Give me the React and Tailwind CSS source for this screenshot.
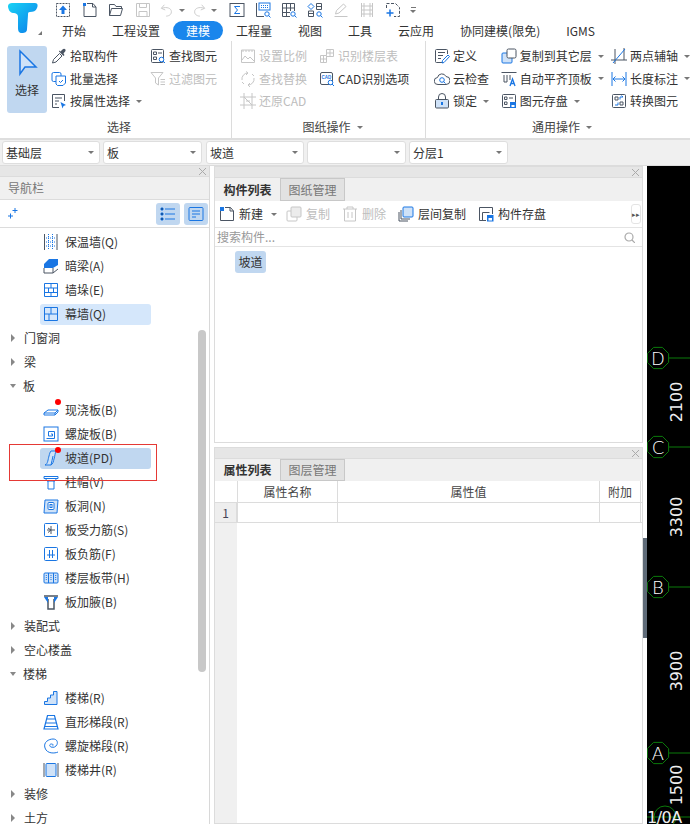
const BLUE = "#1a76e3";
const DARK = "#4b5563";
const GREY = "#c6c6c6";
const PALE = "#cfe2f8";

function Svg({ children, size = 16, className = "" }) {
  return (
    <svg width={size} height={size} viewBox="0 0 16 16" fill="none" strokeWidth="1" className={`shrink-0 ${className}`}>
      {children}
    </svg>
  );
}

const icons = {
  upload: (
    <>
      <rect x="1.5" y="1.5" width="13" height="13" stroke={DARK} strokeDasharray="2 1" />
      <path d="M8 3.5 12 8H9.5v4h-3V8H4z" fill={BLUE} />
    </>
  ),
  newFile: (
    <>
      <path d="M2 3v11.5h12V5l-3-3.5H5" stroke={DARK} />
      <path d="M10.5 1.5V5H14" stroke={DARK} />
      <path d="M1 1h3v3H1z" fill={BLUE} strokeDasharray="1 1" />
    </>
  ),
  open: <path d="M1.5 13.5v-11h5l1.5 2h5.5v2M1.5 13.5h11l2-7h-11z" stroke={DARK} />,
  save: (
    <>
      <path d="M1.5 1.5h13v13h-13z" stroke={GREY} />
      <path d="M4.5 1.5v4h7v-4M4 14.5v-5h8v5" stroke={GREY} />
    </>
  ),
  undo: <path d="M5 2 1.5 6 6 8M2 6c6-2 11 0 11 4s-4 5-6 5" stroke={GREY} />,
  redo: <path d="M11 2l3.5 4L10 8M14 6C8 4 3 6 3 10s4 5 6 5" stroke={GREY} />,
  sigma: (
    <>
      <rect x="1" y="1.5" width="14" height="13" stroke={DARK} />
      <path d="M11 4.5H5.5L8.5 8l-3 3.5H11" stroke={BLUE} />
    </>
  ),
  gridFind: (
    <>
      <path d="M1.5 1v13.5H9" stroke={DARK} />
      <rect x="4" y="1" width="11" height="7" stroke={BLUE} />
      <path d="M6 3.5h7M6 5.5h7" stroke={BLUE} strokeDasharray="1 1" />
      <circle cx="12" cy="12" r="2.2" stroke={BLUE} />
      <path d="m13.5 13.5 2 2" stroke={BLUE} />
    </>
  ),
  tableFind: (
    <>
      <path d="M9 14.5H1.5v-13h12V9M1.5 6h12M1.5 10.5H9M5.5 1.5v13M9.5 1.5V9" stroke={DARK} />
      <circle cx="12" cy="12" r="2.2" stroke={BLUE} />
      <path d="m13.5 13.5 2 2" stroke={BLUE} />
    </>
  ),
  nodeFind: (
    <>
      <path d="M9.5 1.5h5v6h-5zM9.5 4.5h5M1.5 9h5v5.5h-5zM1.5 11.5h5" stroke={DARK} />
      <path d="m4 1.5 3 3-3 3-3-3z" stroke={BLUE} />
      <circle cx="12" cy="12" r="2.2" stroke={BLUE} />
      <path d="m13.5 13.5 2 2" stroke={BLUE} />
    </>
  ),
  pen: <path d="M1.5 14.5h13M2.5 12l1-3.5 7-6.5 2.5 2.5-7 6.5z" stroke={GREY} />,
  columns: <path d="M2.5 1v14M13.5 1v14M2.5 4h11M2.5 8h11M2.5 12h11M5 1v14M11 1v14" stroke={GREY} />,
  addFrame: (
    <>
      <path d="M1.5 6V1.5h9l4 4v9H9" stroke={DARK} strokeDasharray="3 1.5" />
      <path d="M5 7.5v7M1.5 11h7" stroke={BLUE} strokeWidth="1.5" />
    </>
  ),
  pick: (
    <>
      <path d="m1.5 15 1-3.5 6-6 2.5 2.5-6 6z" stroke={DARK} />
      <path d="m8 3.5 4.5 4.5 1-1-1-1.5 2-2.5c.5-2-1.5-3-3-1.5l-2 2-1.5-1z" fill={DARK} />
    </>
  ),
  batch: (
    <>
      <rect x="1" y="1.5" width="9" height="9" rx="1.5" stroke={BLUE} />
      <path d="M5 5h9.5v7L12 14.5H6.5L5 13z" stroke={BLUE} fill="#fff" />
      <path d="m8 10 1.5 1.5L12 9" stroke={BLUE} />
    </>
  ),
  attrSelect: (
    <>
      <path d="M8 14.5H1.5v-13h12V8" stroke={DARK} />
      <path d="M4 5h7M4 8h4M4 11h2" stroke={DARK} />
      <path d="m9.5 9 5.500 3-2.500 1-1 2.500z" fill={BLUE} />
    </>
  ),
  findEl: (
    <>
      <rect x="1.5" y="1.5" width="12" height="13" rx="1" stroke={DARK} />
      <path d="M3.5 4h3v2.5h-3zM8 5h4M3.5 9h3v2.5h-3z" stroke={DARK} />
      <circle cx="11.5" cy="11.5" r="2.3" fill="#fff" stroke={BLUE} />
      <path d="m13 13 2 2" stroke={BLUE} />
    </>
  ),
  filter: <path d="M1 1.5h12L8.5 7v7L5.5 12V7zM10.5 8.5H15M10.500 11H15M10.500 13.500H15" stroke={GREY} />,
  scale: <path d="M1.5 2h13M1.5 2v12.5h13V2M3 2v2M6 2v2M9 2v2M12 2v2M2 12l3-4 3 3 2-2 4 4" stroke={GREY} />,
  layers: <path d="M1.5 14.5v-7h6v-6h7v7H8M4.5 7.500v7M11 1.500v7M1.500 11h6M8 5h6.500M7.500 7.500V14.500h-6" stroke={GREY} />,
  replace: <path d="M2 9A6 6 0 0 1 8 2M6 .5 8 2 6 4M14 7a6 6 0 0 1-6 7M10 12l-2 2 2 2M2 11l2 2M14 5l-2-2" stroke={GREY} />,
  restore: <path d="M0 4h16M0 12h16M4 0v16M12 0v16M4 4l8 8M6 8h4" stroke={GREY} />,
  cad: (
    <>
      <rect x="1.5" y="1.5" width="12" height="12" rx="1.5" stroke={DARK} />
      <text x="2.6" y="7.5" fontSize="4.5" fontWeight="700" fill={BLUE} fontFamily="Liberation Sans">CAD</text>
      <circle cx="11.5" cy="11.5" r="2.3" fill="#fff" stroke={BLUE} />
      <path d="m13 13 2 2" stroke={BLUE} />
    </>
  ),
  define: (
    <>
      <path d="M9 14.5H2.5a1 1 0 0 1-1-1v-11a1 1 0 0 1 1-1h10a1 1 0 0 1 1 1V6" stroke={DARK} />
      <path d="M4 4.5h7M4 7.5h5M4 10.5h3" stroke={DARK} />
      <path d="m8 15 .5-2.5L14 7l1.500 1.500-5.500 6z" stroke={BLUE} />
    </>
  ),
  cloud: (
    <>
      <path d="M4 13.5a3.5 3.5 0 0 1-.5-7A4.5 4.5 0 0 1 12 5.5a4 4 0 0 1 0 8z" stroke={DARK} />
      <circle cx="8" cy="9" r="2.3" stroke={BLUE} />
      <path d="m9.5 10.5 2 2" stroke={BLUE} />
    </>
  ),
  lock: (
    <>
      <rect x="1.5" y="6.5" width="13" height="8.5" rx="1" stroke={DARK} fill={PALE} />
      <path d="M4.5 6.5V4a3.5 3.5 0 0 1 7 0v2.5" stroke={DARK} />
      <rect x="7" y="9" width="2" height="3" fill={BLUE} />
    </>
  ),
  copyLayer: (
    <>
      <rect x="1" y="5" width="10" height="10" rx="1" fill={PALE} stroke={BLUE} />
      <rect x="6" y="1" width="9" height="9" rx="1.5" fill="#fff" stroke={DARK} />
    </>
  ),
  align: (
    <>
      <path d="M.5 1.5h15M3 4v7h3V4M9 4v5" stroke={DARK} />
      <path d="m9 15 2.5-7 2.5 7M10 12.5h3" stroke={BLUE} strokeWidth="1.3" />
    </>
  ),
  storeEl: (
    <>
      <rect x="1.5" y="1.5" width="13" height="13" rx="1" stroke={DARK} />
      <path d="M3.5 4H6v2.5H3.5zM8 5h4M3.5 9H6v2.5H3.5z" stroke={DARK} />
      <rect x="9" y="9" width="6" height="6" fill={BLUE} />
      <rect x="10.5" y="12" width="3" height="2" fill="#fff" />
    </>
  ),
  twoPoint: (
    <>
      <path d="M4 1v15M0 12h16M13 0v12" stroke={DARK} />
      <path d="m2 15 12-14" stroke={BLUE} />
    </>
  ),
  measure: <path d="M1 1v14M15 1v14M2 8h12M4.5 5.5 2 8l2.5 2.5M11.5 5.5 14 8l-2.5 2.5" stroke={BLUE} />,
  convert: (
    <>
      <rect x="1.5" y="1.5" width="13" height="13" rx="1" stroke={DARK} />
      <path d="M4 4h3v3H4zM9 9h3v3H9z" stroke={DARK} />
      <path d="M9 6.5V4h3M10.5 2.5 12 4M7 9.5V12H4" stroke={BLUE} />
    </>
  ),
  newDoc: (
    <>
      <path d="M1.5 5v9.5h13V5l-3-3.500H6" stroke={DARK} />
      <path d="M11 1.5V5h3.5" stroke={DARK} />
      <path d="M1 1h4v4H1z" fill={BLUE} />
    </>
  ),
  copyOff: (
    <>
      <rect x="1" y="5" width="10" height="10" rx="1" stroke={GREY} />
      <rect x="5" y="1" width="10" height="10" rx="1" fill="#ececec" stroke={GREY} />
    </>
  ),
  trash: <path d="M1 3h14M5 3V1h6v2M2.5 3v12h11V3M6 6v6M10 6v6" stroke={GREY} />,
  floorCopy: (
    <>
      <path d="M1 6v9h9M3 4v9h9" stroke={DARK} />
      <rect x="5" y="1" width="10" height="10" rx="1" fill={PALE} stroke={BLUE} />
    </>
  ),
  saveComp: (
    <>
      <path d="M8 14.5H1.5v-13h13V8" stroke={DARK} />
      <path d="M4.5 14V6.5h7" stroke={DARK} />
      <rect x="9" y="9" width="6.5" height="6.5" fill={BLUE} />
      <rect x="10.5" y="12" width="3.5" height="2.5" fill="#fff" />
    </>
  ),
  insul: (
    <>
      <path d="M1.5 0v16M14 0v16" stroke={DARK} />
      <path d="M5.500 0v16M9.500 0v16M3 4h9.500M3 8h9.500M3 12h9.500" stroke={BLUE} strokeDasharray="1 1" />
    </>
  ),
  hiddenBeam: (
    <>
      <path d="M1 6 6 1h9v6L10 10H1z" fill={BLUE} />
      <path d="M1 10v5h9l5-4M10 10v5" stroke={DARK} />
    </>
  ),
  pier: <path d="M1.5 1.500h13v13h-13zM1.500 6h13M1.500 10.500h13M8 1.500V6M5.500 6v4.500M10.500 6v4.500M8 10.500v4" stroke={BLUE} />,
  curtain: <path d="M1.500 1.500h13v13h-13zM1.500 8h13M8 1.500V8M6 8v6.500" stroke={BLUE} />,
  castSlab: (
    <>
      <path d="m1 11 4-3h10v2l-3 3H1z" stroke={BLUE} />
      <path d="M1 11h11l3-3M12 11v2" stroke={BLUE} />
    </>
  ),
  spiralSlab: (
    <>
      <rect x="1" y="1" width="14" height="14" stroke={BLUE} />
      <path d="M8 8h1.500v2h-4V5.500h6v7h-8" stroke={BLUE} />
    </>
  ),
  ramp: (
    <>
      <path d="M2 15c3-1 3-6 4-9 .5-2 1-4 2-5h5c-1 2-1 5-2 8-.5 2-1 5-3 6z" fill={PALE} stroke={BLUE} />
      <path d="M8 15c1-3 1-6 2-9" stroke={BLUE} />
    </>
  ),
  capital: <path d="M1 2.500h14v2H1zM2.500 4.500h11L12 7H4zM5 7v8h6V7" stroke={BLUE} />,
  hole: (
    <>
      <path d="M2 2h13l-1 13H1z" fill={PALE} stroke={BLUE} />
      <rect x="5" y="4.500" width="6" height="7" rx="1" stroke={BLUE} fill="#fff" />
      <rect x="7" y="6.500" width="2" height="3" stroke={BLUE} />
    </>
  ),
  rebar: (
    <>
      <rect x="1.500" y="1.500" width="13" height="13" rx="1" stroke={BLUE} />
      <path d="M8 4v8M4 8h8M5 6l3 2M5 10.500 8 8" stroke={DARK} />
    </>
  ),
  negRebar: (
    <>
      <rect x="1.500" y="1.500" width="13" height="13" rx="1" stroke={BLUE} />
      <path d="M4 9h8M6.500 4v8M9.500 4v8" stroke={BLUE} />
    </>
  ),
  band: (
    <>
      <rect x="1" y="3" width="14" height="10" rx="1" fill={PALE} stroke={BLUE} />
      <path d="M5.500 3v10M10.500 3v10" stroke={BLUE} />
      <path d="M3.300 5v6M8 5v6M12.700 5v6" stroke={BLUE} strokeDasharray="1 1" />
    </>
  ),
  haunch: (
    <>
      <path d="M1 2h14M5 5v10h6V5" stroke={DARK} strokeWidth="1.500" />
      <path d="m1 3 4 6V3zM15 3l-4 6V3z" fill={BLUE} />
    </>
  ),
  stair: <path d="M1.500 14.500v-3h3V8h3V5h3V1.500h3.500v13z" fill={PALE} stroke={BLUE} />,
  stairRun: <path d="M1 15 4.500 1.500h7L15 15zM4 5h8M3 9h10M2 12.500h12" stroke={BLUE} strokeWidth="1.200" />,
  spiralStair: <path d="M15 14c-3 1.500-11 2-13-4S6 1 10 1c4 0 5 3 4 5.500S10 10 8 9s-1.500-3 .5-3 2 1.500 1 2" stroke={BLUE} />,
  stairWell: (
    <>
      <path d="M1 1v14M15 1v14" stroke={DARK} />
      <rect x="3" y="1.500" width="10" height="13" rx="1" fill={PALE} stroke={BLUE} />
    </>
  ),
};

function Ic({ name }) {
  return <Svg>{icons[name]}</Svg>;
}

function Caret({ className = "" }) {
  return <span className={`inline-block h-0 w-0 border-x-[3px] border-t-[3px] border-x-transparent border-t-[#777] ${className}`} />;
}

function RibbonItem({ icon, label, off, caret }) {
  return (
    <div className={`flex h-[22.5px] items-center gap-[3px] whitespace-nowrap ${off ? "text-[#bdbdbd]" : "text-[#333]"}`}>
      <Ic name={icon} />
      <span>{label}</span>
      {caret && <Caret className="ml-[3px]" />}
    </div>
  );
}

function RibbonGroup({ title, caret, className, children }) {
  return (
    <div className={`flex h-full flex-col border-r border-[#dcdcdc] ${className}`}>
      <div className="flex h-[78px] pt-[4px]">{children}</div>
      <div className="flex h-[16px] items-center justify-center gap-[6px] text-[#444]">
        <span>{title}</span>
        {caret && <Caret />}
      </div>
    </div>
  );
}

function Combo({ label, className = "" }) {
  return (
    <div className={`flex h-[23px] items-center justify-between rounded-[3px] border border-[#dedede] bg-white pr-[5px] pl-[3px] text-[#333] ${className}`}>
      <span>{label}</span>
      <Caret />
    </div>
  );
}

function CloseStrip() {
  return (
    <div className="flex h-[11px] items-center justify-end border-b border-[#dcdcdc] bg-[#e6e6e6] pr-[3px]">
      <svg width="7" height="7" viewBox="0 0 7 7" stroke="#aaa"><path d="m0 0 7 7M7 0 0 7" /></svg>
    </div>
  );
}

function Tabs({ first, second, className = "h-[23px]" }) {
  return (
    <div className={`flex bg-[#f0f0f0] ${className}`}>
      <div className="flex w-[65px] items-center justify-center font-semibold text-[#333]">{first}</div>
      <div className="flex w-[65px] items-center justify-center border border-[#c8c8c8] bg-[#e2e2e2] text-[#777]">{second}</div>
    </div>
  );
}

function Leaf({ icon, label, selected, active, dot }) {
  return (
    <div className="flex h-[24px] items-center pl-[40px]">
      <div className={`flex h-[21px] w-[111px] items-center rounded-[3px] pl-[3px] ${selected ? "bg-[#d5e7fb]" : ""} ${active ? "bg-[#c0d7f0]" : ""}`}>
        <div className="relative mr-[7px] h-[16px] w-[15px]">
          <Ic name={icon} />
          {dot && <span className="absolute -top-[3px] right-[-3px] h-[6px] w-[6px] rounded-full bg-[#f00]" />}
        </div>
        <span className="whitespace-nowrap">{label}</span>
      </div>
    </div>
  );
}

function Group({ label, open }) {
  return (
    <div className="flex h-[24px] items-center pl-[10px]">
      {open ? (
        <span className="mr-[7px] inline-block h-0 w-0 border-x-[3.5px] border-t-[4px] border-x-transparent border-t-[#888]" />
      ) : (
        <span className="mr-[9px] ml-[1px] inline-block h-0 w-0 border-y-[4px] border-l-[4px] border-y-transparent border-l-[#888]" />
      )}
      <span>{label}</span>
    </div>
  );
}

function ToolBtn({ icon, label, off, className = "" }) {
  return (
    <div className={`flex items-center gap-[4px] whitespace-nowrap ${off ? "text-[#bdbdbd]" : "text-[#333]"} ${className}`}>
      <Ic name={icon} />
      <span>{label}</span>
    </div>
  );
}

function Axis({ cy, label }) {
  const pts = [...Array(8)].map((_, i) => {
    const a = (i / 8) * Math.PI * 2 + Math.PI / 8;
    return `${11 + 11.5 * Math.cos(a)},${cy + 11.5 * Math.sin(a)}`;
  });
  return (
    <g>
      <polygon points={pts.join(" ")} fill="none" stroke="#0b7a0b" />
      <line x1="22" x2="43" y1={cy} y2={cy} stroke="#0b7a0b" />
      <text x="11" y={cy + 6.5} textAnchor="middle" fontSize="18" fill="#fff" fontFamily="DejaVu Sans" fontWeight="200">{label}</text>
    </g>
  );
}

function Dim({ cy, label }) {
  return (
    <text transform={`translate(35 ${cy}) rotate(-90)`} textAnchor="middle" fontSize="16" fill="#eee" fontFamily="DejaVu Sans">{label}</text>
  );
}

const quickIcons = ["upload", "newFile", "open", "save"];
const quickIcons2 = ["sigma", "gridFind", "tableFind", "nodeFind", "pen", "columns", "addFrame"];

export default function App() {
  return (
    <div
      className="flex h-[824px] w-[690px] flex-col overflow-hidden bg-white text-[12px] text-[#333]"
      style={{ fontFamily: '"Noto Sans CJK SC", "Noto Sans", sans-serif' }}
    >
      {/* title + tabs */}
      <div className="flex h-[41px] shrink-0">
        <div className="relative w-[49px] shrink-0">
          <svg width="32" height="30" viewBox="0 0 32 30" className="mt-[3px] ml-[7px]">
            <defs>
              <linearGradient id="logo" x1="0" x2="1" y1="0" y2="1">
                <stop offset="0" stopColor="#19d3f5" />
                <stop offset="1" stopColor="#0a7bea" />
              </linearGradient>
            </defs>
            <path d="M1 3C1 1 3 0 5 0H28C31 0 31 3 30 5C29 8 26 9 23 9C21 9 21 10 21 12L20 26C20 29 18 30 15 30C12 30 11 28 11 25V14C11 11 9 10 6 10C3 10 1 6 1 3z" fill="url(#logo)" />
          </svg>
          <span className="absolute top-[31px] left-[38px] h-0 w-0 border-b-[4px] border-l-[4px] border-b-[#777] border-l-transparent" />
        </div>
        <div className="flex flex-col">
          <div className="flex h-[20px] items-center pl-[1px]">
            {quickIcons.map((n) => (
              <div key={n} className="flex w-[26.5px] justify-center"><Ic name={n} /></div>
            ))}
            <div className="flex w-[35px] items-center gap-[5px] pl-[4px]"><Svg size={14}>{icons.undo}</Svg><Caret /></div>
            <div className="flex w-[33px] items-center gap-[5px] pl-[1px]"><Svg size={14}>{icons.redo}</Svg><Caret /></div>
            {quickIcons2.map((n) => (
              <div key={n} className="flex w-[26px] justify-center"><Ic name={n} /></div>
            ))}
            <div className="ml-[4px] flex flex-col items-center gap-[2px]">
              <span className="h-px w-[5px] bg-[#777]" />
              <Caret />
            </div>
          </div>
          <div className="flex h-[21px] items-center">
            {["开始", "工程设置", "建模", "工程量", "视图", "工具", "云应用", "协同建模(限免)", "IGMS"].map((t) => (
              <div key={t} className={`flex h-[19px] items-center rounded-full px-[13px] whitespace-nowrap ${t === "建模" ? "bg-[#1a86ec] text-white" : ""}`}>{t}</div>
            ))}
          </div>
        </div>
      </div>

      {/* ribbon */}
      <div className="flex h-[97px] shrink-0 items-start">
        <RibbonGroup title="选择" className="w-[232px] pl-[7px]">
          <div className="mt-px mr-[4px] flex h-[67px] w-[40px] flex-col items-center rounded-[3px] bg-[#c0d7f0] pt-[3px]">
            <svg width="22" height="28" viewBox="0 0 22 28" fill="#cfe2f8" stroke={BLUE} strokeWidth="1.5"><path d="M4 2 20 18 9 18 4 25z" /></svg>
            <span className="mt-[4px]">选择</span>
          </div>
          <div className="w-[99px]">
            <RibbonItem icon="pick" label="拾取构件" />
            <RibbonItem icon="batch" label="批量选择" />
            <RibbonItem icon="attrSelect" label="按属性选择" caret />
          </div>
          <div>
            <RibbonItem icon="findEl" label="查找图元" />
            <RibbonItem icon="filter" label="过滤图元" off />
          </div>
        </RibbonGroup>
        <RibbonGroup title="图纸操作" caret className="w-[194px] pl-[8px]">
          <div className="w-[79px]">
            <RibbonItem icon="scale" label="设置比例" off />
            <RibbonItem icon="replace" label="查找替换" off />
            <RibbonItem icon="restore" label="还原CAD" off />
          </div>
          <div>
            <RibbonItem icon="layers" label="识别楼层表" off />
            <RibbonItem icon="cad" label="CAD识别选项" />
          </div>
        </RibbonGroup>
        <div className="flex h-full w-[264px] flex-col pl-[8px]">
          <div className="flex h-[78px] pt-[4px]">
            <div className="w-[67px]">
              <RibbonItem icon="define" label="定义" />
              <RibbonItem icon="cloud" label="云检查" />
              <RibbonItem icon="lock" label="锁定" caret />
            </div>
            <div className="w-[111px]">
              <RibbonItem icon="copyLayer" label="复制到其它层" caret />
              <RibbonItem icon="align" label="自动平齐顶板" caret />
              <RibbonItem icon="storeEl" label="图元存盘" caret />
            </div>
            <div>
              <RibbonItem icon="twoPoint" label="两点辅轴" caret />
              <RibbonItem icon="measure" label="长度标注" caret />
              <RibbonItem icon="convert" label="转换图元" />
            </div>
          </div>
          <div className="flex h-[16px] items-center justify-center gap-[6px] text-[#444]">
            <span>通用操作</span>
            <Caret />
          </div>
        </div>
      </div>

      {/* combos */}
      <div className="flex h-[27px] shrink-0 items-center gap-[3px] border-t-2 border-[#dedede] bg-[#f0f0f0] pl-[2px]">
        <Combo label="基础层" className="w-[98px]" />
        <Combo label="板" className="w-[99px]" />
        <Combo label="坡道" className="ml-[1px] w-[98px]" />
        <Combo label="" className="w-[99px]" />
        <Combo label="分层1" className="w-[99px]" />
      </div>

      {/* main */}
      <div className="flex min-h-0 flex-1 border-t border-[#dcdcdc]">
        {/* navigation */}
        <div className="flex w-[210px] shrink-0 flex-col border-r border-[#d8d8d8]">
          <CloseStrip />
          <div className="flex h-[23px] items-center border-b border-[#dcdcdc] bg-[#f0f0f0] pl-[8px] text-[#777]">导航栏</div>
          <div className="flex h-[28px] items-center justify-between border-b border-[#dcdcdc] pr-[1px] pl-[8px]">
            <svg width="10" height="11" viewBox="0 0 10 11" stroke={BLUE}><path d="M7 0v5M4.5 2.5h5M2.5 5.5v5M0 8h5" /></svg>
            <div className="flex gap-[4px]">
              <div className="flex h-[22px] w-[24px] items-center justify-center rounded-[3px] bg-[#c0d7f0]">
                <svg width="16" height="14" viewBox="0 0 16 14" stroke={BLUE}><path d="M5 2h10M5 7h10M5 12h10M1 1h2v2H1zM1 6h2v2H1zM1 11h2v2H1z" /></svg>
              </div>
              <div className="flex h-[22px] w-[24px] items-center justify-center rounded-[3px] bg-[#c0d7f0]">
                <svg width="16" height="14" viewBox="0 0 16 14" stroke={BLUE} fill="none"><rect x="1" y=".5" width="14" height="13" rx="1" /><path d="M4 4h8M4 7h8M4 10h4" /></svg>
              </div>
            </div>
          </div>
          <div className="relative min-h-0 flex-1 pt-[2px]">
            <Leaf icon="insul" label="保温墙(Q)" />
            <Leaf icon="hiddenBeam" label="暗梁(A)" />
            <Leaf icon="pier" label="墙垛(E)" />
            <Leaf icon="curtain" label="幕墙(Q)" selected />
            <Group label="门窗洞" />
            <Group label="梁" />
            <Group label="板" open />
            <Leaf icon="castSlab" label="现浇板(B)" dot />
            <Leaf icon="spiralSlab" label="螺旋板(B)" />
            <Leaf icon="ramp" label="坡道(PD)" active dot />
            <Leaf icon="capital" label="柱帽(V)" />
            <Leaf icon="hole" label="板洞(N)" />
            <Leaf icon="rebar" label="板受力筋(S)" />
            <Leaf icon="negRebar" label="板负筋(F)" />
            <Leaf icon="band" label="楼层板带(H)" />
            <Leaf icon="haunch" label="板加腋(B)" />
            <Group label="装配式" />
            <Group label="空心楼盖" />
            <Group label="楼梯" open />
            <Leaf icon="stair" label="楼梯(R)" />
            <Leaf icon="stairRun" label="直形梯段(R)" />
            <Leaf icon="spiralStair" label="螺旋梯段(R)" />
            <Leaf icon="stairWell" label="楼梯井(R)" />
            <Group label="装修" />
            <Group label="土方" />
            {/* scrollbar + highlight frame */}
            <span className="absolute top-[102px] left-[198px] h-[342px] w-[8px] rounded-full bg-[#c8c8c8]" />
            <span className="absolute top-[216px] left-[9px] h-[37px] w-[148px] border border-[#e53935]" />
          </div>
        </div>

        {/* centre panels */}
        <div className="ml-[4px] flex w-[429px] shrink-0 flex-col gap-[4px]">
          <div className="flex h-[277px] flex-col border border-[#dcdcdc]">
            <CloseStrip />
            <Tabs first="构件列表" second="图纸管理" />
            <div className="flex h-[27px] items-center border-b border-[#e4e4e4] pl-[4px]">
              <ToolBtn icon="newDoc" label="新建" />
              <Caret className="mr-[9px] ml-[8px]" />
              <ToolBtn icon="copyOff" label="复制" off className="mr-[12px]" />
              <ToolBtn icon="trash" label="删除" off className="mr-[12px]" />
              <ToolBtn icon="floorCopy" label="层间复制" className="mr-[12px]" />
              <ToolBtn icon="saveComp" label="构件存盘" />
              <div className="mr-px ml-auto flex h-[20px] w-[10px] items-center justify-center rounded-[3px] border border-[#e4e4e4] text-[7px] leading-none text-[#555]">▸▸</div>
            </div>
            <div className="flex h-[19px] items-center justify-between border-b border-[#e4e4e4] pr-[7px] pl-[2px] text-[#999]">
              <span>搜索构件...</span>
              <svg width="11" height="11" viewBox="0 0 11 11" fill="none" stroke="#aaa" strokeWidth="1.2"><circle cx="5" cy="5" r="4" /><path d="m8 8 3 3" /></svg>
            </div>
            <div className="pt-[4px] pl-[20px]">
              <span className="inline-flex h-[22px] w-[31px] items-center justify-center rounded-[3px] bg-[#c0d7f0]">坡道</span>
            </div>
          </div>
          <div className="flex min-h-0 flex-1 flex-col border border-[#dcdcdc]">
            <CloseStrip />
            <Tabs first="属性列表" second="图层管理" className="h-[22px]" />
            <div className="flex min-h-0 flex-1">
              <div className="w-[22px] shrink-0 bg-[#f0f0f0]">
                <div className="h-[21px] bg-white" />
                <div className="flex h-[21px] items-center justify-center border-y border-r border-[#dcdcdc] bg-[#eee] text-[#445]">1</div>
              </div>
              <div className="flex-1">
                <div className="flex h-[21px]">
                  <div className="flex w-[101px] items-center justify-center border-x border-[#dcdcdc] text-[#444]">属性名称</div>
                  <div className="flex w-[262px] items-center justify-center border-r border-[#dcdcdc] text-[#444]">属性值</div>
                  <div className="flex w-[41px] items-center justify-center border-r border-[#dcdcdc] text-[#444]">附加</div>
                </div>
                <div className="flex h-[21px] border-y border-[#dcdcdc]">
                  <div className="w-[101px] border-x border-[#dcdcdc]" />
                  <div className="w-[262px] border-r border-[#dcdcdc]" />
                  <div className="w-[41px] border-r border-[#dcdcdc]" />
                </div>
              </div>
            </div>
          </div>
        </div>

        {/* splitter */}
        <div className="w-[4px] shrink-0">
          <div className="mt-[372px] h-[100px] w-[4px] bg-[#5f6b78]" />
        </div>

        {/* drawing area */}
        <svg width="43" height="658" viewBox="0 0 43 658" className="shrink-0 bg-black">
          <Axis cy={192} label="D" />
          <Axis cy={281} label="C" />
          <Axis cy={421} label="B" />
          <Axis cy={587} label="A" />
          <Dim cy={236} label="2100" />
          <Dim cy={351} label="3300" />
          <Dim cy={505} label="3900" />
          <Dim cy={619} label="1500" />
          <circle cx="18" cy="651" r="11" fill="none" stroke="#0b7a0b" />
          <line x1="0" x2="43" y1="651" y2="651" stroke="#0b7a0b" />
          <text x="0" y="657" fontSize="16" fill="#eee" fontFamily="DejaVu Sans" letterSpacing="-0.5">1/0A</text>
        </svg>
      </div>
    </div>
  );
}
